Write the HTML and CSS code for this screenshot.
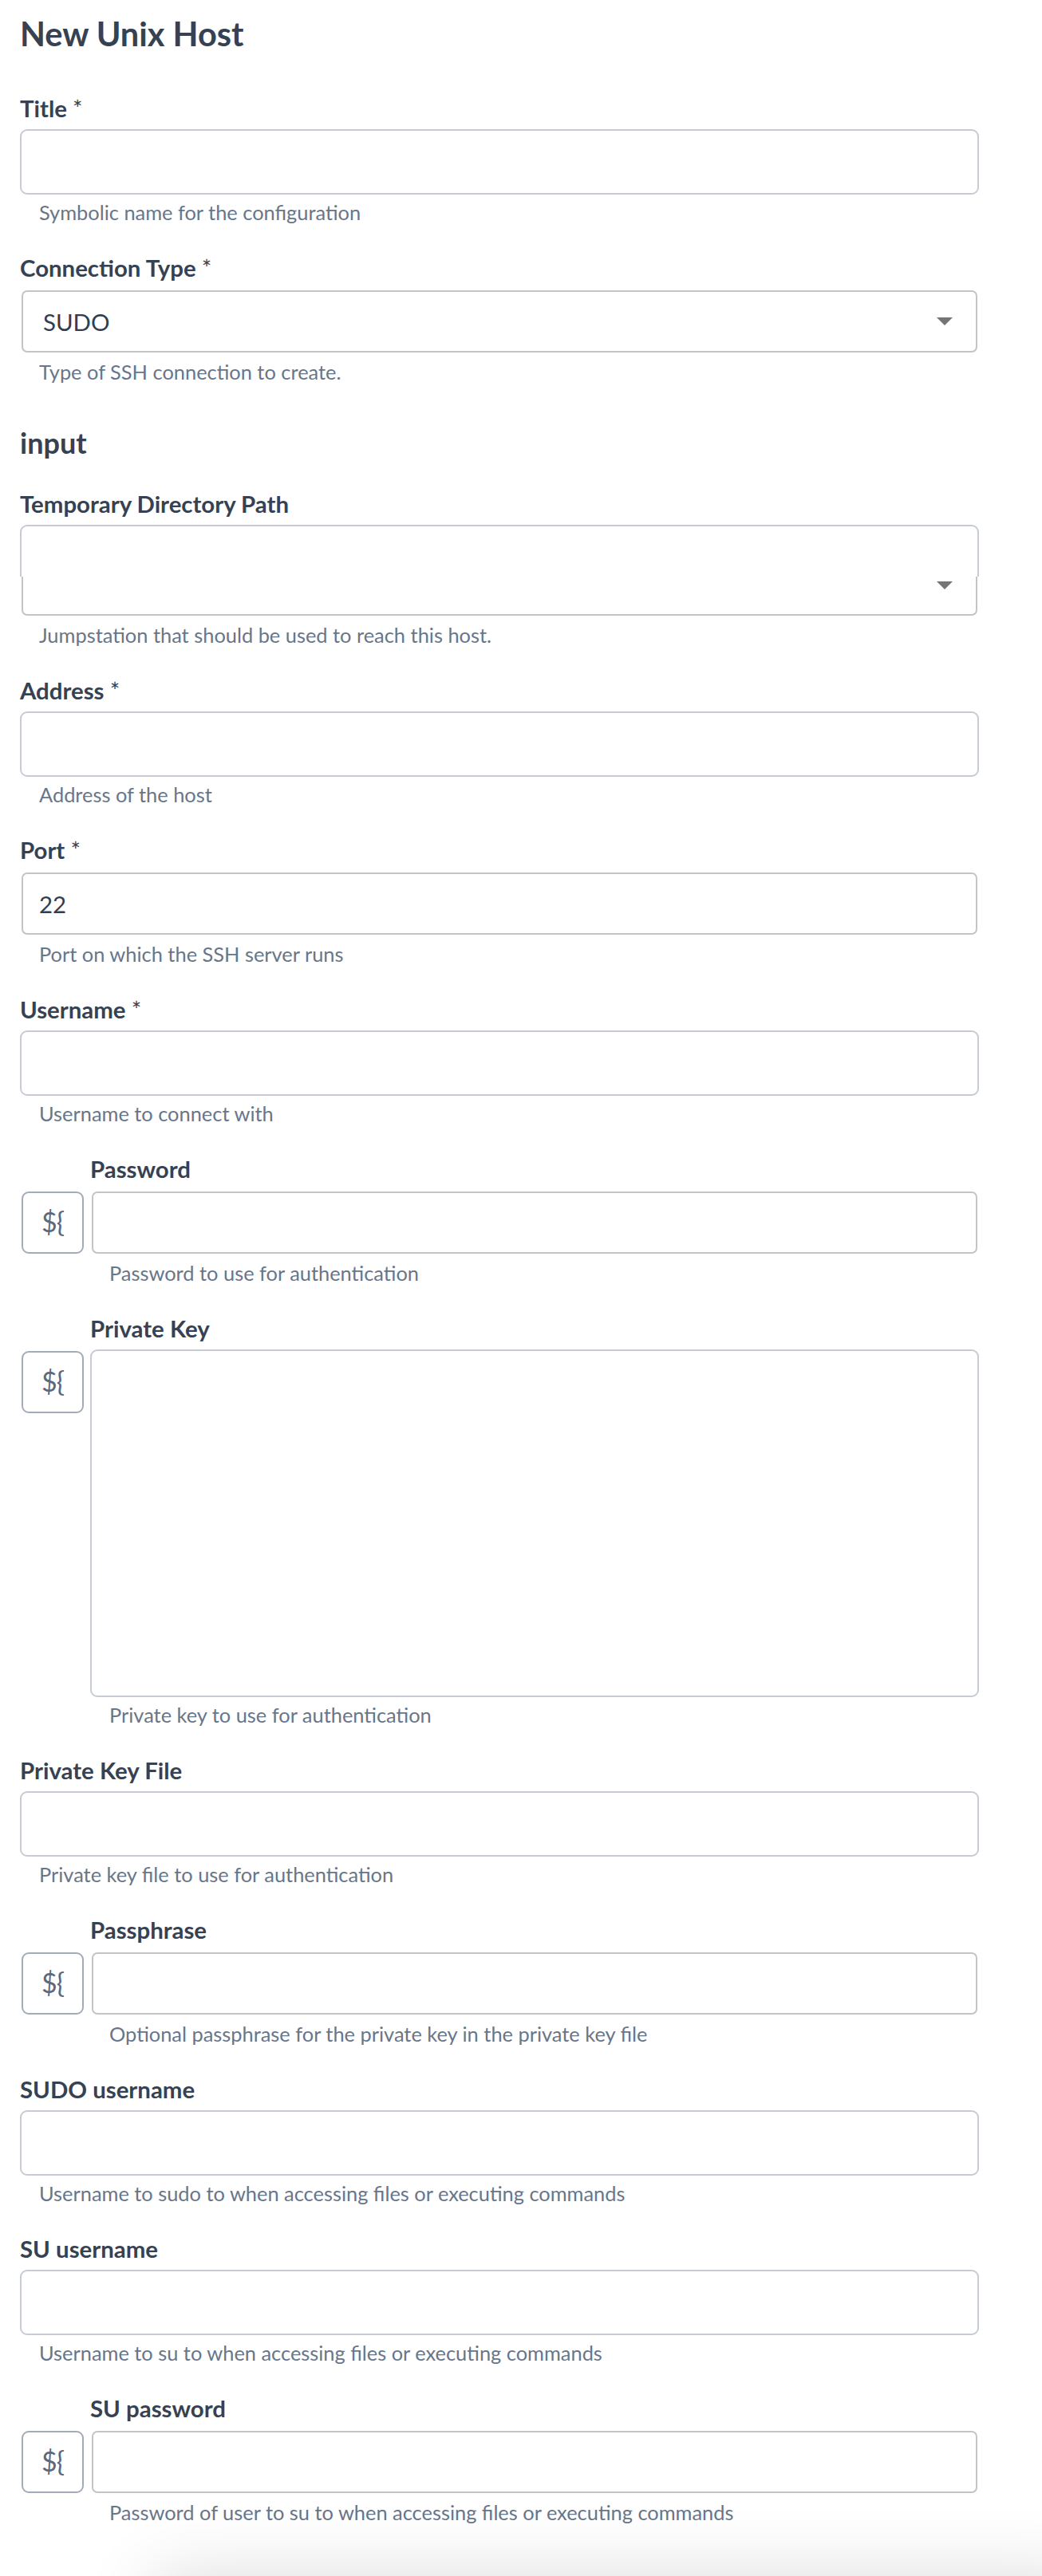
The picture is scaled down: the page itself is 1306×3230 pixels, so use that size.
FILE: index.html
```html
<!DOCTYPE html>
<html lang="en">
<head>
<meta charset="UTF-8">
<title>New Unix Host</title>
<link rel="stylesheet" href="styles.css">
</head>
<body>
<form class="form" autocomplete="off">
  <h1>New Unix Host</h1>

  <div class="field">
    <label class="label" for="title">Title <span class="req">*</span></label>
    <input class="input" id="title" type="text">
    <p class="hint">Symbolic name for the configuration</p>
  </div>

  <div class="field">
    <label class="label" for="connectionType">Connection Type <span class="req">*</span></label>
    <div class="select">
      <select id="connectionType">
        <option>SUDO</option>
        <option>SFTP</option>
        <option>SCP</option>
        <option>SU</option>
      </select>
    </div>
    <p class="hint">Type of SSH connection to create.</p>
  </div>

  <h2 class="section-title">input</h2>

  <div class="field">
    <label class="label" for="tmpDir">Temporary Directory Path</label>
    <div class="combo">
      <input class="combo-input" id="tmpDir" type="text">
      <div class="combo-select"><select aria-label="Jumpstation"><option></option></select></div>
    </div>
    <p class="hint hint-combo">Jumpstation that should be used to reach this host.</p>
  </div>

  <div class="field">
    <label class="label" for="address">Address <span class="req">*</span></label>
    <input class="input" id="address" type="text">
    <p class="hint">Address of the host</p>
  </div>

  <div class="field">
    <label class="label" for="port">Port <span class="req">*</span></label>
    <input class="input filled" id="port" type="text" value="22">
    <p class="hint">Port on which the SSH server runs</p>
  </div>

  <div class="field">
    <label class="label" for="username">Username <span class="req">*</span></label>
    <input class="input" id="username" type="text">
    <p class="hint">Username to connect with</p>
  </div>

  <div class="field var-field">
    <label class="label" for="password">Password</label>
    <button class="var-btn" type="button">${</button>
    <input class="input filled" id="password" type="password">
    <p class="hint">Password to use for authentication</p>
  </div>

  <div class="field var-field">
    <label class="label" for="privateKey">Private Key</label>
    <button class="var-btn" type="button">${</button>
    <textarea class="input textarea" id="privateKey"></textarea>
    <p class="hint">Private key to use for authentication</p>
  </div>

  <div class="field">
    <label class="label" for="privateKeyFile">Private Key File</label>
    <input class="input" id="privateKeyFile" type="text">
    <p class="hint">Private key file to use for authentication</p>
  </div>

  <div class="field var-field">
    <label class="label" for="passphrase">Passphrase</label>
    <button class="var-btn" type="button">${</button>
    <input class="input filled" id="passphrase" type="password">
    <p class="hint">Optional passphrase for the private key in the private key file</p>
  </div>

  <div class="field">
    <label class="label" for="sudoUsername">SUDO username</label>
    <input class="input" id="sudoUsername" type="text">
    <p class="hint">Username to sudo to when accessing files or executing commands</p>
  </div>

  <div class="field">
    <label class="label" for="suUsername">SU username</label>
    <input class="input" id="suUsername" type="text">
    <p class="hint">Username to su to when accessing files or executing commands</p>
  </div>

  <div class="field var-field">
    <label class="label" for="suPassword">SU password</label>
    <button class="var-btn" type="button">${</button>
    <input class="input filled" id="suPassword" type="password">
    <p class="hint">Password of user to su to when accessing files or executing commands</p>
  </div>
</form>

<div class="dock"></div>
</body>
</html>
```

FILE: styles.css
```css
:root{
  --bg: #ffffff;
  --text: #364152;
  --text-dim: #68768a;
  --value: #333d4d;
  --line: #c6cbd4;
  --line-grey: #c4c4c4;
  --line-btn: #a4abb8;
  --arrow: #757575;
  --font: Lato, "Noto Sans", sans-serif;
}
*{ box-sizing: border-box; }
html,body{
  margin:0; padding:0; background:var(--bg); color:var(--text);
  font-family: var(--font);
}

.form{ padding: 18px 79px 120px 25px; }
h1{ font-size: 41.5px; line-height: 48px; font-weight: 700; margin: 0 0 53px; }
.section-title{ font-size: 36px; line-height: 40px; font-weight: 700; margin: 54px 0 40px; }

/* flex column so the 2px insets of the grey controls don't collapse into the label gap */
.field{ display:flex; flex-direction: column; margin-bottom: 38px; }
.label{
  display:block; font-size: 29.4px; line-height: 34px; font-weight: 700;
  margin-bottom: 9px;
}
.label .req{ font-weight: 400; }
.hint{
  margin: 8px 0 0; padding-left: 24px;
  font-size: 25.4px; line-height: 29px; color: var(--text-dim);
}

/* text inputs: empty ones get the blue-grey outline, filled ones sit 2px inside it */
.input{
  display:block; width: 100%; height: 82px; margin: 0;
  background: #fff; border: 2px solid var(--line); border-radius: 9px;
  padding: 0 20px; font-family: var(--font); font-size: 29.4px; color: var(--value);
  outline: none;
}
.input.filled{
  width: calc(100% - 4px); height: 78px; margin: 2px;
  border-color: var(--line-grey); border-radius: 7px;
}
.textarea{ height: 436px; resize: none; padding: 18px 20px; }

.select{ position: relative; margin: 2px; }
.select select{
  display:block; width: 100%; height: 78px; appearance: none; -webkit-appearance: none;
  background: #fff; border: 2px solid var(--line-grey); border-radius: 7px;
  padding: 0 25px; font-family: var(--font); font-size: 29.4px; color: var(--value);
  outline: none;
}
.select::after,
.combo-select::after{
  content:""; position: absolute; right: 31px; top: 50%; margin-top: -5px;
  border-left: 10px solid transparent; border-right: 10px solid transparent;
  border-top: 10px solid var(--arrow); pointer-events: none;
}

/* input stacked on a select, the two boxes share one outline */
.combo-input{
  display:block; width: 100%; height: 65px; margin: 0;
  background: #fff; border: 2px solid var(--line); border-bottom: none;
  border-radius: 9px 9px 0 0; outline: none;
}
.combo-select{ position: relative; margin: 0 2px; }
.combo-select select{
  display:block; width: 100%; height: 49px; appearance: none; -webkit-appearance: none;
  background: #fff; border: 2px solid var(--line-grey); border-top: none;
  border-radius: 0 0 7px 7px; outline: none;
}
.combo-select::after{ top: 6px; margin-top: 0; }
.hint-combo{ margin-top: 10px; }

/* fields with the ${ variable toggle on the left */
.var-field{
  display:grid; grid-template-columns: 82px 1fr; column-gap: 6px;
}
.var-field .label{ grid-column: 2; }
.var-field .hint{ grid-column: 2; }
.var-field .input{ grid-column: 2; }
.var-btn{
  grid-column: 1; grid-row: 2; align-self: start;
  width: 78px; height: 78px; margin: 2px;
  display:flex; align-items:center; justify-content:center;
  background: #fff; border: 2px solid var(--line-btn); border-radius: 9px;
  font-family: var(--font); font-size: 34px; letter-spacing: -1px; color: #5c687c;
  cursor: pointer; padding: 0 0 4px;
}

/* bottom action bar, sits just under the fold */
.dock{
  position: fixed; left: 190px; right: -60px; bottom: -140px; height: 140px;
  background: #fff; border-radius: 24px;
  box-shadow: 0 0 90px rgba(0,0,0,0.14);
}
```
